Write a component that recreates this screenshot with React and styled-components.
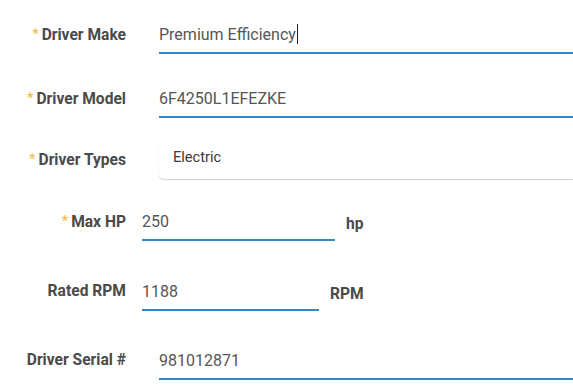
import React from "react";
import styled, { createGlobalStyle } from "styled-components";

const Global = createGlobalStyle`
  html, body { margin: 0; padding: 0; background: #fff; }
  html { min-height: 100%; }
  body { font-family: Roboto, "Noto Sans", sans-serif; width: 573px; min-height: 386px; overflow: hidden; }
`;

const Form = styled.div`
  display: flex;
  flex-direction: column;
  padding-top: 14px;
  padding-bottom: 8px;
  width: 573px;
`;

const Row = styled.div`
  display: flex;
  align-items: center;
  height: 40px;
  margin-top: ${(p) => p.$mt || 0}px;
`;

const Label = styled.div`
  width: 126px;
  flex: none;
  text-align: right;
  font-weight: 700;
  font-size: 15.6px;
  color: #4a4a4a;
  white-space: nowrap;
`;

const Star = styled.span`
  color: #f2b83a;
  font-weight: 400;
  font-size: 15px;
  margin-right: 3px;
  vertical-align: 1px;
`;

const Input = styled.div`
  box-sizing: border-box;
  height: 40px;
  margin-left: ${(p) => p.$indent}px;
  ${(p) => (p.$width ? `width: ${p.$width}px; flex: none;` : "flex: 1;")}
  border-bottom: 2px solid #3586c4;
  display: flex;
  align-items: center;
  font-size: 16px;
  color: #555;
  padding-top: 2px;
  white-space: nowrap;
`;

const Caret = styled.span`
  display: inline-block;
  width: 1px;
  height: 20px;
  background: #222;
  margin-left: 1px;
`;

const Select = styled.div`
  box-sizing: border-box;
  flex: 1;
  height: 40px;
  margin-left: 33px;
  padding-left: 14px;
  padding-bottom: 4px;
  display: flex;
  align-items: center;
  font-size: 14.6px;
  color: #3a3a3a;
  border-radius: 5px 0 0 5px;
  box-shadow: 0 1px 1px rgba(0, 0, 0, 0.18), 0 0 1px rgba(0, 0, 0, 0.06);
`;

const Unit = styled.div`
  margin-left: 11px;
  margin-top: 6px;
  font-weight: 700;
  font-size: 15.6px;
  color: #4a4a4a;
`;

function Req({ children }) {
  return (
    <Label>
      <Star>*</Star>
      {children}
    </Label>
  );
}

export default function App() {
  return (
    <>
      <Global />
      <Form>
        <Row>
          <Req>Driver Make</Req>
          <Input $indent={33}>
            Premium Efficiency
            <Caret />
          </Input>
        </Row>
        <Row $mt={24}>
          <Req>Driver Model</Req>
          <Input $indent={33}>6F4250L1EFEZKE</Input>
        </Row>
        <Row $mt={21}>
          <Req>Driver Types</Req>
          <Select>Electric</Select>
        </Row>
        <Row $mt={22}>
          <Req>Max HP</Req>
          <Input $indent={16} $width={193}>250</Input>
          <Unit>hp</Unit>
        </Row>
        <Row $mt={30}>
          <Label>Rated RPM</Label>
          <Input $indent={16} $width={177}>1188</Input>
          <Unit>RPM</Unit>
        </Row>
        <Row $mt={29}>
          <Label>Driver Serial #</Label>
          <Input $indent={33}>981012871</Input>
        </Row>
      </Form>
    </>
  );
}
